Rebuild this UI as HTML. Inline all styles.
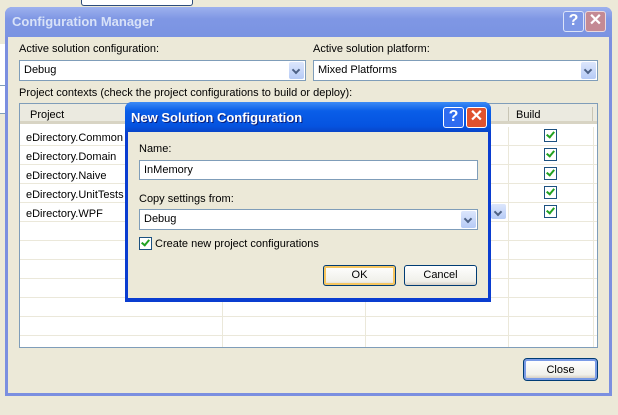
<!DOCTYPE html>
<html><head><style>
*{margin:0;padding:0;box-sizing:border-box}
body{width:618px;height:415px;background:#ECE9D8;position:relative;overflow:hidden;font-family:"Liberation Sans",Tahoma,sans-serif;font-size:11px;color:#000}
.a{position:absolute}
.combo{position:absolute;background:#fff;border:1px solid #7F9DB9;padding:3px 0 0 4px;height:21px}
.arr{position:absolute;right:1px;top:1px;width:15px;height:17px;background:linear-gradient(#DCE6FC,#B6CBF6);border-radius:2px}
.arr:after{content:"";position:absolute;left:4px;top:5px;width:4px;height:4px;border-right:2px solid #4D6185;border-bottom:2px solid #4D6185;transform:rotate(45deg)}
.cb{position:absolute;width:13px;height:13px;border:1px solid #1C5180;background:#fff}
.cb:after{content:"";position:absolute;left:3px;top:0px;width:3px;height:6px;border-right:2px solid #21A121;border-bottom:2px solid #21A121;transform:rotate(40deg)}
.btn{position:absolute;border:1px solid #003C74;border-radius:3px;background:linear-gradient(#fff,#F0F0EA 80%,#D6D0C5);text-align:center;line-height:18px}
.tb{position:absolute;width:21px;height:21px;border:1px solid #fff;border-radius:3px;color:#fff;font-weight:bold;text-align:center}
.row{position:absolute;left:0;width:100%;height:1px;background:#EBE8DA}
</style></head><body>
<div class="a" style="left:0;top:44px;width:5px;height:70px;background:#fff;border-bottom:1px solid #7F9DB9"></div>
<div class="a" style="left:0;top:66px;width:5px;height:20px;background:#fff;border-bottom:1px solid #7F9DB9"></div>
<div class="a" style="left:81px;top:0;width:112px;height:6px;border:1px solid #2C4C7C;border-top:none;background:#fff;border-radius:0 0 3px 3px"></div>

<!-- main window -->
<div class="a" style="left:5px;top:7px;width:607px;height:389px;background:#7B8FE0;border-radius:7px 7px 0 0"></div>
<div class="a" style="left:5px;top:7px;width:607px;height:30px;background:linear-gradient(#9DB1EE,#7F97E4 40%,#7A93E2);border-radius:7px 7px 0 0"></div>
<div class="a" style="left:12px;top:14px;font-weight:bold;font-size:13px;color:#D8E2F8">Configuration Manager</div>
<div class="tb" style="left:563px;top:11px;background:#7E98E6;border-color:#DCE4F8;font-size:16px;line-height:18px">?</div>
<div class="tb" style="left:585px;top:11px;background:#C48A94;border-color:#EAD8DC;font-size:16px;line-height:18px">✕</div>
<div class="a" style="left:8px;top:37px;width:601px;height:356px;background:#ECE9D8"></div>

<div class="a" style="left:19px;top:43px">Active solution configuration:</div>
<div class="combo" style="left:19px;top:60px;width:287px">Debug<div class="arr"></div></div>
<div class="a" style="left:313px;top:43px">Active solution platform:</div>
<div class="combo" style="left:313px;top:60px;width:285px">Mixed Platforms<div class="arr"></div></div>
<div class="a" style="left:19px;top:87px">Project contexts (check the project configurations to build or deploy):</div>

<div class="a" style="left:19px;top:103px;width:579px;height:245px;border:1px solid #7F9DB9;background:#fff;overflow:hidden">
 <div class="a" style="left:0;top:0;width:100%;height:20px;background:#EBEAE0;border-bottom:3px solid #D8D4C4"></div>
 <div class="a" style="left:10px;top:5px">Project</div>
 <div class="a" style="left:488px;top:3px;width:1px;height:14px;background:#C8C5B5"></div>
 <div class="a" style="left:496px;top:5px">Build</div>
 <div class="a" style="left:572px;top:3px;width:1px;height:14px;background:#C8C5B5"></div>
 <div class="row" style="top:41px"></div><div class="row" style="top:60px"></div><div class="row" style="top:79px"></div><div class="row" style="top:98px"></div><div class="row" style="top:117px"></div><div class="row" style="top:136px"></div><div class="row" style="top:155px"></div><div class="row" style="top:174px"></div><div class="row" style="top:193px"></div><div class="row" style="top:212px"></div><div class="row" style="top:231px"></div>
 <div class="a" style="left:202px;top:23px;width:1px;height:220px;background:#EBE8DA"></div>
 <div class="a" style="left:345px;top:23px;width:1px;height:220px;background:#EBE8DA"></div>
 <div class="a" style="left:488px;top:23px;width:1px;height:220px;background:#EBE8DA"></div>
 <div class="a" style="left:573px;top:23px;width:1px;height:220px;background:#EBE8DA"></div>
 <div class="a" style="left:6px;top:25px;line-height:19px">eDirectory.Common<br>eDirectory.Domain<br>eDirectory.Naive<br>eDirectory.UnitTests<br>eDirectory.WPF</div>
 <div class="cb" style="left:524px;top:25px"></div><div class="cb" style="left:524px;top:44px"></div><div class="cb" style="left:524px;top:63px"></div><div class="cb" style="left:524px;top:82px"></div><div class="cb" style="left:524px;top:101px"></div>
 <div class="arr" style="left:471px;top:100px;right:auto;width:15px;height:15px"></div>
</div>

<div class="btn" style="left:524px;top:359px;width:73px;height:21px;border:2px solid #7A9BE6;outline:1px solid #003C74">Close</div>

<!-- dialog -->
<div class="a" style="left:125px;top:102px;width:366px;height:200px;background:#0A3DD0;border-radius:7px 7px 0 0"></div>
<div class="a" style="left:125px;top:102px;width:366px;height:30px;background:linear-gradient(#3D8CF6,#0A5EE8 30%,#0553E0 80%,#0845C8);border-radius:7px 7px 0 0"></div>
<div class="a" style="left:131px;top:110px;font-weight:bold;font-size:13px;color:#fff;text-shadow:1px 1px #0A1E7A">New Solution Configuration</div>
<div class="tb" style="left:443px;top:107px;background:#2F6CF0;font-size:16px;line-height:18px">?</div>
<div class="tb" style="left:466px;top:107px;background:#E0522E;font-size:16px;line-height:18px">✕</div>
<div class="a" style="left:128px;top:132px;width:360px;height:166px;background:#ECE9D8"></div>
<div class="a" style="left:139px;top:143px">Name:</div>
<div class="combo" style="left:139px;top:160px;width:339px;height:20px">InMemory</div>
<div class="a" style="left:139px;top:193px">Copy settings from:</div>
<div class="combo" style="left:139px;top:209px;width:339px;height:21px">Debug<div class="arr"></div></div>
<div class="cb" style="left:139px;top:237px"></div>
<div class="a" style="left:155px;top:238px">Create new project configurations</div>
<div class="btn" style="left:323px;top:265px;width:73px;height:21px;box-shadow:inset 0 0 0 2px #F6C660">OK</div>
<div class="btn" style="left:404px;top:265px;width:73px;height:21px">Cancel</div>
</body></html>
